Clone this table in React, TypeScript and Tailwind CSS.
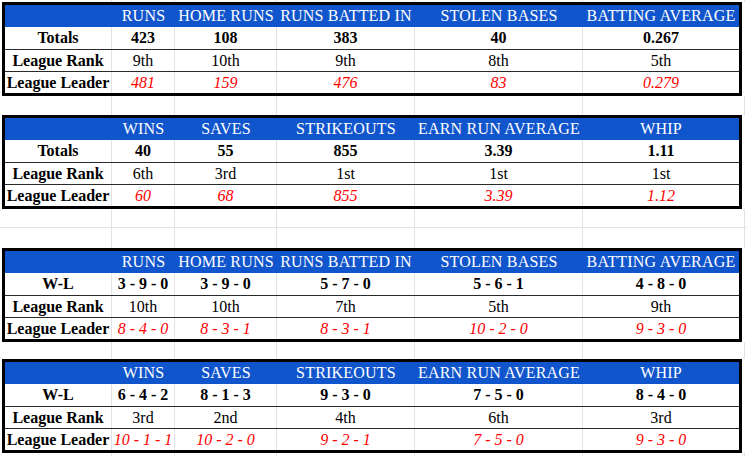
type StatTable = {
  first: string;
  headers: string[];
  totals: string[];
  rank: string[];
  leader: string[];
};

const tables: StatTable[] = [
  {
    first: "Totals",
    headers: ["RUNS", "HOME RUNS", "RUNS BATTED IN", "STOLEN BASES", "BATTING AVERAGE"],
    totals: ["423", "108", "383", "40", "0.267"],
    rank: ["9th", "10th", "9th", "8th", "5th"],
    leader: ["481", "159", "476", "83", "0.279"],
  },
  {
    first: "Totals",
    headers: ["WINS", "SAVES", "STRIKEOUTS", "EARN RUN AVERAGE", "WHIP"],
    totals: ["40", "55", "855", "3.39", "1.11"],
    rank: ["6th", "3rd", "1st", "1st", "1st"],
    leader: ["60", "68", "855", "3.39", "1.12"],
  },
  {
    first: "W-L",
    headers: ["RUNS", "HOME RUNS", "RUNS BATTED IN", "STOLEN BASES", "BATTING AVERAGE"],
    totals: ["3 - 9 - 0", "3 - 9 - 0", "5 - 7 - 0", "5 - 6 - 1", "4 - 8 - 0"],
    rank: ["10th", "10th", "7th", "5th", "9th"],
    leader: ["8 - 4 - 0", "8 - 3 - 1", "8 - 3 - 1", "10 - 2 - 0", "9 - 3 - 0"],
  },
  {
    first: "W-L",
    headers: ["WINS", "SAVES", "STRIKEOUTS", "EARN RUN AVERAGE", "WHIP"],
    totals: ["6 - 4 - 2", "8 - 1 - 3", "9 - 3 - 0", "7 - 5 - 0", "8 - 4 - 0"],
    rank: ["3rd", "2nd", "4th", "6th", "3rd"],
    leader: ["10 - 1 - 1", "10 - 2 - 0", "9 - 2 - 1", "7 - 5 - 0", "9 - 3 - 0"],
  },
];

const cols = "grid grid-cols-[107px_63px_102px_138px_168px_156px]";

function GapRow({ h, line }: { h: string; line?: boolean }) {
  return (
    <div
      className={`grid grid-cols-[112px_63px_102px_138px_168px_162px] ${h} ${line ? "border-b border-[#e2e2e2]" : ""}`}
    >
      {[0, 1, 2, 3, 4, 5].map((i) => (
        <div key={i} className="border-r border-[#e2e2e2]" />
      ))}
    </div>
  );
}

function DataRow({
  label,
  values,
  kind,
  top,
}: {
  label: string;
  values: string[];
  kind: "bold" | "plain" | "leader";
  top?: boolean;
}) {
  const valueClass =
    kind === "bold" ? "font-bold text-black" : kind === "leader" ? "italic text-[#ff0000]" : "text-black";
  return (
    <div className={`${cols} h-[22px] ${top ? "border-t border-[#2a2a2a]" : ""}`}>
      <div className="flex items-center justify-center border-r border-[#e2e2e2] font-bold text-black">
        {label}
      </div>
      {values.map((v, i) => (
        <div
          key={i}
          className={`flex items-center justify-center whitespace-nowrap ${valueClass} ${i < values.length - 1 ? "border-r border-[#e2e2e2]" : ""}`}
        >
          {v}
        </div>
      ))}
    </div>
  );
}

function Table({ t }: { t: StatTable }) {
  return (
    <div className="ml-[2px] w-[740px] border-[3px] border-black bg-white">
      <div className={`${cols} h-[22px] bg-[#1155cc]`}>
        <div />
        {t.headers.map((h) => (
          <div key={h} className="flex items-center justify-center whitespace-nowrap text-white tracking-[0.2px]">
            {h}
          </div>
        ))}
      </div>
      <DataRow label={t.first} values={t.totals} kind="bold" />
      <DataRow label="League Rank" values={t.rank} kind="plain" top />
      <DataRow label="League Leader" values={t.leader} kind="leader" top />
    </div>
  );
}

export default function App() {
  return (
    <div className="w-[747px] h-[456px] overflow-hidden bg-white font-['Liberation_Serif',serif] text-[16px] leading-none">
      <GapRow h="h-[2px]" />
      <Table t={tables[0]} />
      <GapRow h="h-[19px]" />
      <Table t={tables[1]} />
      <GapRow h="h-[19px]" line />
      <GapRow h="h-[20px]" />
      <Table t={tables[2]} />
      <GapRow h="h-[17px]" />
      <Table t={tables[3]} />
      <GapRow h="h-[10px]" />
    </div>
  );
}
